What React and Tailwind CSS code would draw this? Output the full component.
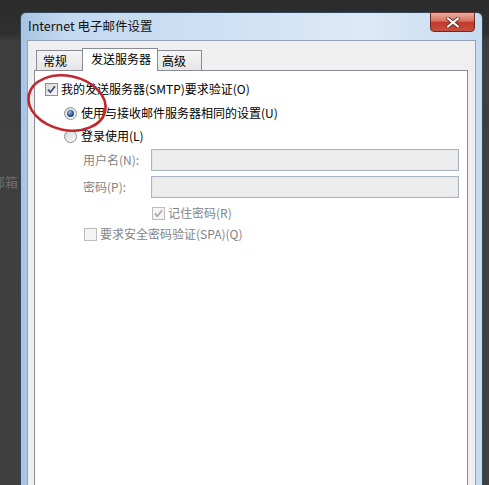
import React from 'react';

function CheckBox({ checked, disabled }) {
  return (
    <span
      className={`flex h-[13px] w-[13px] shrink-0 items-center justify-center border bg-white ${
        disabled ? 'border-[#bcbcbc]' : 'border-[#8e8f8f]'
      }`}
    >
      <span
        className={`flex h-[11px] w-[11px] items-center justify-center ${
          disabled ? 'bg-[#f4f4f4]' : 'bg-gradient-to-br from-[#d6d6d6] to-[#fafafa]'
        }`}
      >
        {checked && (
          <svg width="9" height="9" viewBox="0 0 9 9">
            <path
              d="M1 4.6 L3.4 7.2 L8 1.2"
              fill="none"
              stroke={disabled ? '#a8a8a8' : '#3a4c78'}
              strokeWidth="1.7"
            />
          </svg>
        )}
      </span>
    </span>
  );
}

function Radio({ checked }) {
  return (
    <span className="flex h-[13px] w-[13px] shrink-0 items-center justify-center rounded-full border border-[#8e8f8f] bg-gradient-to-br from-[#d4d4d4] to-white">
      {checked && (
        <span className="h-[7px] w-[7px] rounded-full bg-[radial-gradient(circle_at_40%_35%,#9cc0ea,#2a548f_55%,#0f2648)]" />
      )}
    </span>
  );
}

function Field({ label }) {
  return (
    <div className="flex h-[22px] items-center pl-[48px]">
      <span className="w-[68px] text-[#838383]">{label}</span>
      <div className="h-[22px] w-[308px] border border-[#a8b4c0] bg-[#ededed] shadow-[inset_0_0_0_1px_#e4e8ec]" />
    </div>
  );
}

export default function App() {
  return (
    <div className="relative flex h-[485px] w-[489px] overflow-hidden bg-[linear-gradient(to_bottom,#2b2b2b_0px,#303030_34px,#3e3e3e_42px,#404040_100%)] text-[12px] leading-none text-black [font-family:'Noto_Sans_CJK_SC',sans-serif]">
      {/* window behind */}
      <div className="w-[20px] shrink-0 overflow-hidden pt-[174px]">
        <span className="-ml-[8px] block whitespace-nowrap text-[13px] leading-[16px] text-[#6e6e6e]">邮箱</span>
      </div>

      {/* dialog */}
      <div className="relative mt-[12px] flex h-[490px] w-[463px] shrink-0 flex-col rounded-t-[6px] border border-[#33475c] bg-[linear-gradient(to_right,#a8c4e3,#c3d9f0_10%,#cfe1f4_45%,#dde9f6_75%,#c6dbf0)] px-[6px]">
        <div className="flex h-[27px] items-center pl-[1px] text-[12.5px] text-[#111]">Internet 电子邮件设置</div>

        <div className="absolute right-[7px] top-[-1px] flex h-[20px] w-[45px] items-center justify-center rounded-b-[4px] border border-[#6b2b22] bg-[linear-gradient(to_bottom,#eab0a0,#d8715f_45%,#c23a2b_52%,#c8503f_100%)]">
          <svg width="14" height="11" viewBox="0 0 14 11">
            <path d="M2 1.5 L12 9.5 M12 1.5 L2 9.5" stroke="#5a2a24" strokeWidth="3.6" strokeLinecap="round" />
            <path d="M2 1.5 L12 9.5 M12 1.5 L2 9.5" stroke="#ffffff" strokeWidth="2.2" strokeLinecap="round" />
          </svg>
        </div>

        {/* client area */}
        <div className="flex flex-1 flex-col border border-[#93a3b5] bg-[#efefef] pl-[6px] pr-[7px] pt-[7px]">
          <div className="flex items-end pl-[2px]">
            <div className="flex h-[20px] w-[46px] items-center border border-b-0 border-r-0 border-[#898c95] bg-gradient-to-b from-[#f4f4f4] to-[#e6e6e6] pl-[6px]">常规</div>
            <div className="z-10 -mb-px flex h-[23px] w-[76px] items-center border border-b-0 border-[#898c95] bg-white pl-[8px] pb-[2px]">发送服务器</div>
            <div className="flex h-[20px] w-[44px] items-center border border-b-0 border-l-0 border-[#898c95] bg-gradient-to-b from-[#f4f4f4] to-[#e6e6e6] pl-[4px]">高级</div>
          </div>

          <div className="flex flex-1 flex-col border border-[#898c95] bg-white pt-[8px]">
            <div className="flex h-[20px] items-center gap-[3px] pl-[10px]">
              <CheckBox checked />
              <span>我的发送服务器(SMTP)要求验证(O)</span>
            </div>
            <div className="mt-[4px] flex h-[20px] items-center gap-[4px] pl-[29px]">
              <Radio checked />
              <span>使用与接收邮件服务器相同的设置(U)</span>
            </div>
            <div className="mt-[3px] flex h-[20px] items-center gap-[4px] pl-[29px]">
              <Radio />
              <span>登录使用(L)</span>
            </div>
            <div className="mt-[3px]">
              <Field label="用户名(N):" />
            </div>
            <div className="mt-[5px]">
              <Field label="密码(P):" />
            </div>
            <div className="mt-[5px] flex h-[20px] items-center gap-[3px] pl-[117px] text-[#838383]">
              <CheckBox checked disabled />
              <span>记住密码(R)</span>
            </div>
            <div className="mt-[1px] flex h-[20px] items-center gap-[3px] pl-[49px] text-[#838383]">
              <CheckBox disabled />
              <span>要求安全密码验证(SPA)(Q)</span>
            </div>
          </div>
        </div>
      </div>

      <div className="w-[6px] shrink-0" />

      {/* red annotation */}
      <svg className="pointer-events-none absolute left-0 top-0" width="489" height="485">
        <ellipse cx="67" cy="103" rx="39" ry="27" transform="rotate(12 67 103)" fill="none" stroke="#c3262c" strokeWidth="2.6" />
      </svg>
    </div>
  );
}
